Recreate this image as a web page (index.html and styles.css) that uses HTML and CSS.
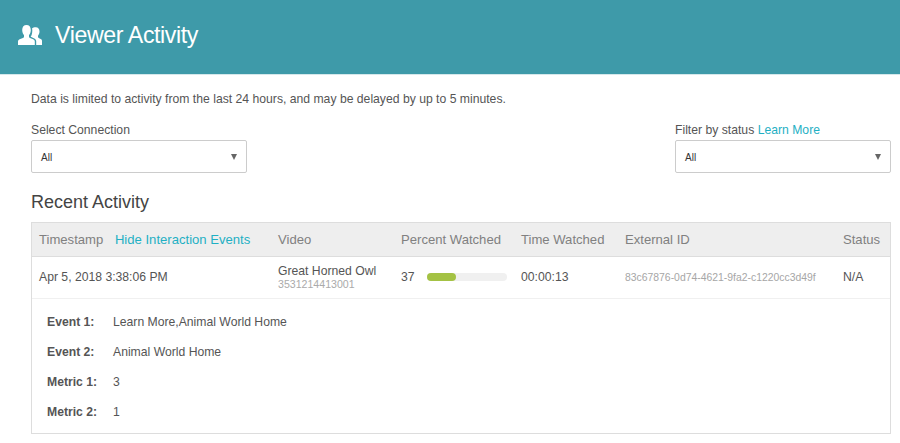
FILE: index.html
```html
<!DOCTYPE html>
<html lang="en">
<head>
    <meta charset="UTF-8">
    <title>Viewer Activity</title>
    <link rel="stylesheet" href="styles.css">
</head>
<body>
    <header class="page-header">
        <svg class="header-icon" viewBox="0 0 24 20" width="24" height="20" aria-hidden="true">
            <path d="M8.500 0C11.200 0 12.800 2 12.800 4.900 12.800 7 12 8.900 11 10V11.700C11 12.300 11.400 12.600 12 12.900L15.200 14.300C16.200 14.800 16.800 15.500 16.800 16.500V20H0V16.500C0 15.500 0.600 14.800 1.600 14.300L4.900 12.900C5.500 12.600 6 12.300 6 11.700V10C5 8.900 4.200 7 4.200 4.900 4.200 2 5.800 0 8.500 0Z"/>
            <path d="M17.800 2.200C20.200 2.200 21.500 4 21.500 6.500 21.500 8.200 20.900 9.700 20 10.700V12.100C20 12.600 20.300 12.900 20.800 13.100L22.700 14C23.500 14.400 24 15 24 15.900V20H18.200V16.300C18.200 15 17.500 14 16.300 13.400L13.300 12.100C13 12 12.800 11.900 12.700 11.700 13.800 10.200 14.300 8.100 14.300 5.500 14.300 4.700 14.200 4 14 3.400 14.800 2.700 16.100 2.200 17.800 2.200Z"/>
        </svg>
        <h1>Viewer Activity</h1>
    </header>

    <main class="content">
        <p class="note">Data is limited to activity from the last 24 hours, and may be delayed by up to 5 minutes.</p>

        <div class="filters">
            <div class="filter filter-connection">
                <label>Select Connection</label>
                <div class="select-box"><span>All</span><i class="caret"></i></div>
            </div>
            <div class="filter filter-status">
                <label>Filter by status <a href="#">Learn More</a></label>
                <div class="select-box"><span>All</span><i class="caret"></i></div>
            </div>
        </div>

        <h2>Recent Activity</h2>

        <section class="activity">
            <div class="row row-head">
                <div class="cell-time">Timestamp <a href="#">Hide Interaction Events</a></div>
                <div>Video</div>
                <div>Percent Watched</div>
                <div>Time Watched</div>
                <div>External ID</div>
                <div>Status</div>
            </div>
            <div class="row row-body">
                <div class="cell-time">Apr 5, 2018 3:38:06 PM</div>
                <div class="cell-video">
                    <div>Great Horned Owl</div>
                    <div class="video-id">3531214413001</div>
                </div>
                <div class="cell-percent">
                    <span>37</span>
                    <div class="bar"><div class="bar-fill" style="width: 37%"></div></div>
                </div>
                <div>00:00:13</div>
                <div class="external-id">83c67876-0d74-4621-9fa2-c1220cc3d49f</div>
                <div>N/A</div>
            </div>
            <dl class="events">
                <dt>Event 1:</dt><dd>Learn More,Animal World Home</dd>
                <dt>Event 2:</dt><dd>Animal World Home</dd>
                <dt>Metric 1:</dt><dd>3</dd>
                <dt>Metric 2:</dt><dd>1</dd>
            </dl>
        </section>
    </main>
</body>
</html>
```

FILE: styles.css
```css
body {
    font-family: 'Liberation Sans', Arial, sans-serif;
    font-size: 12.2px;
    color: #555;
    background-color: white;
    margin: 0;
    padding: 0;
}
a {
    color: #1fb0c4;
    text-decoration: none;
}
.page-header {
    display: flex;
    align-items: center;
    height: 75px;
    padding: 0 0 4px 18px;
    background-color: #3e9aa9;
    color: white;
    box-sizing: border-box;
    border-bottom: 1px solid #d5e8eb;
}
.header-icon {
    fill: white;
    margin-right: 13px;
}
.page-header h1 {
    margin: 0;
    font-size: 23.2px;
    font-weight: normal;
    letter-spacing: -0.4px;
}
.content {
    padding: 17px 9px 0 31px;
}
.note {
    margin: 0;
    line-height: 14px;
}
.filters {
    display: flex;
    justify-content: space-between;
    margin-top: 17px;
}
.filter label {
    display: block;
    line-height: 14px;
    margin-bottom: 3px;
}
.filter-connection {
    width: 216px;
}
.filter-status {
    width: 216px;
}
.select-box {
    display: flex;
    justify-content: space-between;
    align-items: center;
    height: 33px;
    box-sizing: border-box;
    padding: 1px 9px 0;
    border: 1px solid #ccc;
    border-radius: 2px;
    font-size: 10px;
    color: #333;
}
.caret {
    width: 0;
    height: 0;
    border-left: 3px solid transparent;
    border-right: 3px solid transparent;
    border-top: 6px solid #666;
}
h2 {
    margin: 17px 0 8px;
    font-size: 18px;
    line-height: 24px;
    font-weight: normal;
    color: #444;
}
.activity {
    border: 1px solid #ddd;
    height: 212px;
    box-sizing: border-box;
}
.row {
    display: grid;
    grid-template-columns: 239px 123px 120px 104px 218px 1fr;
    align-items: center;
    padding-left: 7px;
}
.row-head {
    height: 33px;
    background-color: #eee;
    border-bottom: 1px solid #ddd;
    color: #808080;
    font-size: 13.1px;
}
.cell-time a {
    margin-left: 8px;
}
.row-body {
    height: 42px;
    padding-bottom: 1px;
    box-sizing: border-box;
    border-bottom: 1px solid #f0f0f0;
}
.video-id {
    font-size: 10.6px;
    color: #aaa;
}
.cell-percent {
    display: flex;
    align-items: center;
}
.bar {
    width: 80px;
    height: 8px;
    margin-left: 12px;
    border-radius: 4px;
    background-color: #f0f0f0;
}
.bar-fill {
    height: 100%;
    border-radius: 4px;
    background-color: #a4c244;
}
.external-id {
    font-size: 10.4px;
    color: #a6a6a6;
}
.events {
    display: grid;
    grid-template-columns: 66px 1fr;
    row-gap: 16px;
    margin: 0;
    padding: 16px 0 0 15px;
    line-height: 14px;
}
.events dt {
    font-weight: bold;
}
.events dd {
    margin: 0;
}
```
